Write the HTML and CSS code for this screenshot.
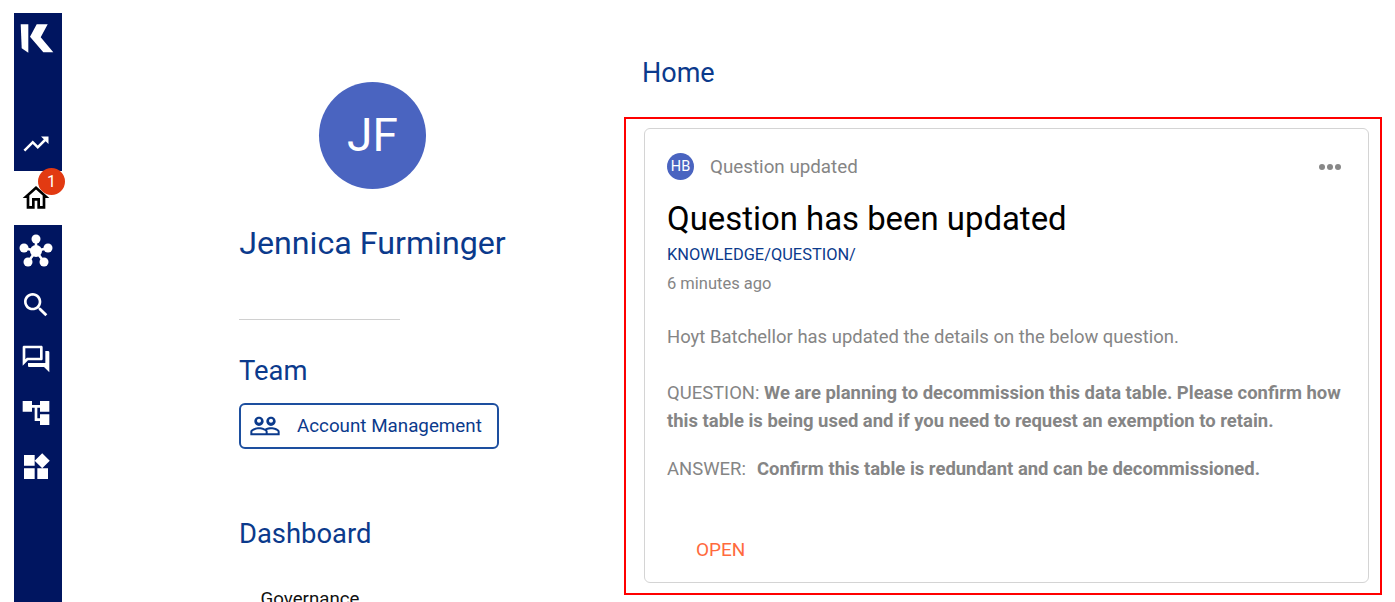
FILE: index.html
```html
<!DOCTYPE html>
<html lang="en">
<head>
  <meta charset="UTF-8" />
  <title>Home</title>
  <link rel="stylesheet" href="styles.css">
</head>
<body>
  <div class="app">
    <nav class="sidebar">
      <div class="logo-box">
        <svg class="logo" width="36" height="31" viewBox="0 0 36 31">
          <path fill="#fff" d="M1.700 1.300H9.300V29.700L2.700 25.300z" />
          <path fill="#fff" d="M28.700 1.300H17.700L11 13.700 24.300 29.300H34.300L21.700 14.300z" />
        </svg>
      </div>
      <a class="nav-item">
        <svg width="30" height="30" viewBox="0 0 24 24"><path fill="#fff" d="M16 6l2.290 2.290-4.880 4.880-4-4L2 16.590 3.410 18l6-6 4 4 6.300-6.290L22 12V6z"/></svg>
      </a>
      <a class="nav-item active">
        <svg width="32" height="32" viewBox="0 0 24 24"><path fill="#000" d="M12 5.690l5 4.500V18h-2v-6H9v6H7v-7.810l5-4.500M12 3L2 12h3v8h6v-6h2v6h6v-8h3L12 3z"/></svg>
        <span class="badge">1</span>
      </a>
      <a class="nav-item">
        <svg width="36" height="36" viewBox="0 0 36 36">
          <g stroke="#fff" stroke-width="2.500">
            <path d="M18 6V18M6 15L18 18M30 15L18 18M10 29L18 18M26 29L18 18"/>
          </g>
          <g fill="#fff">
            <circle cx="18" cy="6" r="4.500"/><circle cx="6" cy="15" r="4.500"/><circle cx="30" cy="15" r="4.500"/>
            <circle cx="10" cy="29" r="4.500"/><circle cx="26" cy="29" r="4.500"/><circle cx="18" cy="18" r="6"/>
          </g>
        </svg>
      </a>
      <a class="nav-item">
        <svg width="32" height="32" viewBox="0 0 24 24"><path fill="#fff" d="M15.500 14h-.790l-.280-.270C15.410 12.590 16 11.110 16 9.500 16 5.910 13.090 3 9.500 3S3 5.910 3 9.500 5.910 16 9.500 16c1.610 0 3.090-.590 4.230-1.570l.270.280v.790l5 4.990L20.490 19l-4.990-5zm-6 0C7.010 14 5 11.990 5 9.500S7.010 5 9.500 5 14 7.010 14 9.500 11.990 14 9.500 14z"/></svg>
      </a>
      <a class="nav-item">
        <svg width="32" height="32" viewBox="0 0 24 24"><path fill="#fff" d="M15 4v7H5.170L4 12.170V4h11m1-2H3c-.550 0-1 .450-1 1v14l4-4h10c.550 0 1-.450 1-1V3c0-.550-.450-1-1-1zm5 4h-2v9H6v2c0 .550.450 1 1 1h11l4 4V7c0-.550-.450-1-1-1z"/></svg>
      </a>
      <a class="nav-item">
        <svg width="32" height="32" viewBox="0 0 24 24"><path fill="#fff" d="M22 11V3h-7v3H9V3H2v8h7V8h2v10h4v3h7v-8h-7v3h-2V8h2v3z"/></svg>
      </a>
      <a class="nav-item">
        <svg width="32" height="32" viewBox="0 0 24 24"><path fill="#fff" d="M13 13v8h8v-8h-8zM3 21h8v-8H3v8zM3 3v8h8V3H3zm13.660-1.310L11 7.340 16.660 13l5.660-5.660-5.660-5.650z"/></svg>
      </a>
    </nav>

    <aside class="profile">
      <div class="profile-head">
        <div class="avatar">JF</div>
        <h1 class="profile-name">Jennica Furminger</h1>
      </div>
      <hr class="divider">
      <h2 class="section-title">Team</h2>
      <a class="team-btn">
        <svg width="32" height="32" viewBox="0 0 24 24"><path fill="#0b3a8c" d="M16.500 13c-1.200 0-3.070.340-4.500 1-1.430-.670-3.300-1-4.500-1C5.330 13 1 14.080 1 16.250V19h22v-2.750c0-2.170-4.330-3.250-6.500-3.250zm-4 4.500h-10v-1.250c0-.540 2.560-1.750 5-1.750s5 1.210 5 1.750v1.250zm9 0H14v-1.250c0-.460-.200-.860-.520-1.220.880-.300 1.960-.530 3.020-.530 2.440 0 5 1.210 5 1.750v1.250zM7.500 12c1.930 0 3.500-1.570 3.500-3.500S9.430 5 7.500 5 4 6.570 4 8.500 5.570 12 7.500 12zm0-5.500c.830 0 1.500.670 1.500 1.500s-.670 1.500-1.500 1.500S6 8.830 6 8s.670-1.500 1.500-1.500zm9 5.500c1.930 0 3.500-1.570 3.500-3.500S18.430 5 16.500 5 13 6.570 13 8.500s1.570 3.500 3.500 3.500zm0-5.500c.830 0 1.500.670 1.500 1.500s-.670 1.500-1.500 1.500S15 8.830 15 8s.670-1.500 1.500-1.500z"/></svg>
        <span>Account Management</span>
      </a>
      <h2 class="section-title dashboard-title">Dashboard</h2>
      <div class="dash-item">Governance</div>
    </aside>

    <main class="main">
      <h2 class="page-title">Home</h2>
      <section class="highlight">
        <article class="card">
          <header class="card-head">
            <span class="mini-avatar">HB</span>
            <span class="card-kind">Question updated</span>
            <span class="dots"><i></i><i></i><i></i></span>
          </header>
          <h3 class="card-title">Question has been updated</h3>
          <div class="card-path">KNOWLEDGE/QUESTION/</div>
          <div class="card-time">6 minutes ago</div>
          <p class="card-intro">Hoyt Batchellor has updated the details on the below question.</p>
          <p class="card-question">QUESTION: <b>We are planning to decommission this data table. Please confirm how this table is being used and if you need to request an exemption to retain.</b></p>
          <p class="card-answer">ANSWER:&nbsp; <b>Confirm this table is redundant and can be decommissioned.</b></p>
          <a class="open-link">OPEN</a>
        </article>
      </section>
    </main>
  </div>
</body>
</html>
```

FILE: styles.css
```css
:root {
  --navy: #001560;
  --blue: #0b3a8c;
  --avatar: #4a64c0;
  --grey: #858585;
}

* {
  margin: 0;
  padding: 0;
  box-sizing: border-box;
}

html, body {
  height: 602px;
  overflow: hidden;
}

body {
  background-color: #fff;
  font-family: Roboto, sans-serif;
}

.app {
  display: flex;
  height: 602px;
  padding: 13px 0 0 14px;
}

.sidebar {
  width: 48px;
  flex-shrink: 0;
  background-color: var(--navy);
  display: flex;
  flex-direction: column;
}

.logo-box {
  height: 104px;
  padding: 10px 0 0 5px;
}

.logo {
  display: block;
}

.nav-item {
  position: relative;
  height: 53.8px;
  display: flex;
  align-items: center;
  justify-content: center;
  padding-right: 5px;
}

.nav-item.active {
  background-color: #fff;
}

.badge {
  position: absolute;
  top: -3px;
  left: 24px;
  width: 27px;
  height: 27px;
  border-radius: 50%;
  background-color: #e23a12;
  color: #fff;
  font-size: 16px;
  line-height: 27px;
  text-align: center;
}

.profile {
  width: 562px;
  flex-shrink: 0;
  padding: 69px 0 0 177px;
}

.profile-head {
  width: 267px;
  display: flex;
  flex-direction: column;
  align-items: center;
}

.avatar {
  width: 107px;
  height: 107px;
  border-radius: 50%;
  background-color: var(--avatar);
  color: #fff;
  font-size: 46px;
  line-height: 107px;
  text-align: center;
}

.profile-name {
  margin-top: 34px;
  font-size: 32.2px;
  font-weight: 400;
  line-height: 40px;
  color: var(--blue);
  white-space: nowrap;
}

.divider {
  width: 161px;
  margin-top: 56px;
  border: 0;
  border-top: 1px solid #d0d0d0;
}

.section-title {
  margin-top: 35px;
  font-size: 27.4px;
  font-weight: 400;
  line-height: 32px;
  color: var(--blue);
}

.team-btn {
  margin-top: 16px;
  width: 260px;
  height: 46px;
  display: flex;
  align-items: center;
  gap: 16.5px;
  padding: 0 0 1px 7.5px;
  border: 2px solid #1d4f9f;
  border-radius: 6px;
  color: var(--blue);
  font-size: 18.8px;
}

.dashboard-title {
  margin-top: 69px;
}

.dash-item {
  margin-top: 37px;
  padding-left: 21.5px;
  font-size: 18.7px;
  line-height: 24px;
  color: #111;
}

.main {
  flex: 1;
  min-width: 0;
}

.page-title {
  margin: 43px 0 0 18px;
  font-size: 27px;
  font-weight: 400;
  line-height: 34px;
  color: var(--blue);
}

.highlight {
  width: 758px;
  height: 478px;
  margin-top: 27px;
  padding: 9px 11px 10px 18px;
  border: 2px solid #f00;
}

.card {
  height: 100%;
  padding: 0 22px;
  border: 1px solid #d4d4d4;
  border-radius: 6px;
  color: var(--grey);
  font-size: 18.47px;
}

.card-head {
  display: flex;
  align-items: center;
  height: 27px;
  margin-top: 24px;
}

.mini-avatar {
  width: 27px;
  height: 27px;
  border-radius: 50%;
  background-color: var(--avatar);
  color: #fff;
  font-size: 14.5px;
  line-height: 27px;
  text-align: center;
}

.card-kind {
  margin-left: 16px;
  font-size: 18.8px;
  line-height: 26px;
}

.dots {
  margin-left: auto;
  margin-right: 5.5px;
  display: flex;
  gap: 2px;
}

.dots i {
  width: 6px;
  height: 6px;
  border-radius: 50%;
  background-color: #888;
}

.card-title {
  margin-top: 18px;
  font-size: 32.9px;
  font-weight: 400;
  line-height: 41px;
  color: #000;
}

.card-path {
  margin-top: 5px;
  font-size: 16.4px;
  line-height: 22px;
  color: var(--blue);
}

.card-time {
  margin-top: 7px;
  font-size: 16.5px;
  line-height: 22px;
}

.card-intro {
  margin-top: 28.5px;
  line-height: 26px;
}

.card-question {
  margin-top: 29px;
  line-height: 28px;
}

.card-answer {
  margin-top: 20.5px;
  line-height: 28px;
}

.card-question b,
.card-answer b {
  font-weight: 700;
}

.card-answer b {
  margin-left: 2px;
}

.open-link {
  display: block;
  margin: 54.5px 0 0 29px;
  font-size: 19px;
  line-height: 24px;
  color: #ff6a3d;
}
```
